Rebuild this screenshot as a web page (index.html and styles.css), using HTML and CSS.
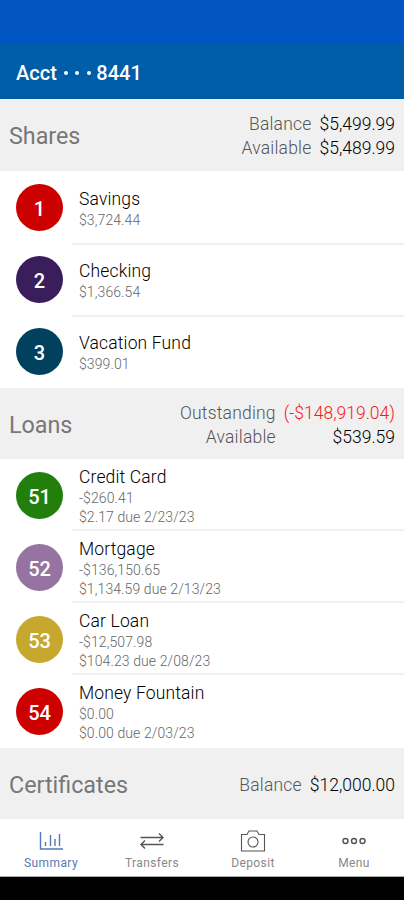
FILE: index.html
```html
<!DOCTYPE html>
<html lang="en">
<head>
<meta charset="utf-8">
<title>Account summary</title>
<link rel="stylesheet" href="styles.css">
</head>
<body>
<div class="status"></div>
<header class="header"><span>Acct</span><span class="dots"><i></i><i></i><i></i></span><span>8441</span></header>
<main>
<section>
<div class="section-head"><h2>Shares</h2><dl class="totals"><dt>Balance</dt><dd>$5,499.99</dd><dt>Available</dt><dd>$5,489.99</dd></dl></div>
<ul class="list">
<li class="row"><span class="badge red">1</span><div class="info"><h3>Savings</h3><p>$3,724.44</p></div></li>
<li class="row"><span class="badge purple">2</span><div class="info"><h3>Checking</h3><p>$1,366.54</p></div></li>
<li class="row"><span class="badge teal">3</span><div class="info"><h3>Vacation Fund</h3><p>$399.01</p></div></li>
</ul>
</section>
<section>
<div class="section-head"><h2>Loans</h2><dl class="totals"><dt>Outstanding</dt><dd class="negative">(-$148,919.04)</dd><dt>Available</dt><dd>$539.59</dd></dl></div>
<ul class="list loans">
<li class="row"><span class="badge green">51</span><div class="info"><h3>Credit Card</h3><p>-$260.41</p><p>$2.17 due 2/23/23</p></div></li>
<li class="row"><span class="badge mauve">52</span><div class="info"><h3>Mortgage</h3><p>-$136,150.65</p><p>$1,134.59 due 2/13/23</p></div></li>
<li class="row"><span class="badge gold">53</span><div class="info"><h3>Car Loan</h3><p>-$12,507.98</p><p>$104.23 due 2/08/23</p></div></li>
<li class="row"><span class="badge red">54</span><div class="info"><h3>Money Fountain</h3><p>$0.00</p><p>$0.00 due 2/03/23</p></div></li>
</ul>
</section>
<section>
<div class="section-head"><h2>Certificates</h2><dl class="totals"><dt>Balance</dt><dd>$12,000.00</dd></dl></div>
</section>
</main>
<nav class="tabs">
<a class="tab active"><svg width="26" height="22" viewBox="0 0 26 22"><path d="M2.500 2v17H25M7.500 16v-4M12.500 16V5M17 16V9M21.500 16V4"/></svg><span>Summary</span></a>
<a class="tab"><svg width="26" height="22" viewBox="0 0 26 22"><path d="M1.500 7.500H24M20 3.500l4 4-4 4M24.500 14.500H2M6 10.500l-4 4 4 4"/></svg><span>Transfers</span></a>
<a class="tab"><svg class="thin" width="26" height="22" viewBox="0 0 26 22"><path d="M1.500 4.500H7l2-3.500h8l2 3.500h5.500V21h-23z"/><circle cx="13" cy="12" r="5"/></svg><span>Deposit</span></a>
<a class="tab"><svg width="26" height="22" viewBox="0 0 26 22"><circle cx="4.500" cy="11" r="2.500"/><circle cx="13" cy="11" r="2.500"/><circle cx="21.500" cy="11" r="2.500"/></svg><span>Menu</span></a>
</nav>
<div class="system-bar"></div>
</body>
</html>
```
FILE: styles.css
```css
* { box-sizing: border-box; margin: 0; padding: 0; }
body { width: 404px; height: 900px; overflow: hidden; background: #fff; font-family: Roboto, sans-serif; color: #222; }
.status { height: 44px; background: #0055c3; }
.header { height: 55px; padding: 3px 16px 0; display: flex; align-items: center; background: #005da8; color: #fff; font-size: 20px; font-weight: 500; }
.dots { display: flex; gap: 7.500px; margin: 0 5.500px 0 7px; }
.dots i { width: 4px; height: 4px; border-radius: 50%; background: #fff; }
.section-head { height: 72px; padding: 2px 9px 0; display: flex; align-items: center; justify-content: space-between; background: #f0f0f0; }
section + section .section-head { height: 71px; }
h2 { font-size: 23.300px; line-height: 28px; font-weight: 400; color: #777; }
.totals { display: grid; grid-template-columns: auto auto; column-gap: 8px; text-align: right; font-size: 17.500px; line-height: 24px; font-weight: 300; }
dt { color: #555; letter-spacing: .2px; }
dd { color: #000; }
.totals .negative { color: #f51a1a; }
.list { list-style: none; padding-bottom: 1px; }
.row { height: 72px; padding-left: 16px; display: flex; align-items: center; gap: 9px; }
.badge { width: 47px; height: 47px; margin-top: 1px; border-radius: 50%; display: flex; align-items: center; justify-content: center; color: #fff; font-size: 20px; font-weight: 500; padding-top: 2px; }
.info { flex: 1; height: 72px; padding: 17px 0 0 7px; }
.row + .row .info { border-top: 2px solid #efefef; padding-top: 15px; }
.info h3 { font-size: 17.500px; line-height: 23px; font-weight: 300; color: #000; letter-spacing: .15px; }
.info p { font-size: 14px; line-height: 19px; font-weight: 300; color: #666; letter-spacing: .1px; }
.loans .info, .loans .row + .row .info { padding-top: 7px; border-top: 0; border-bottom: 2px solid #f1f1f1; }
.loans .row:last-child .info { border-bottom: 0; }
.red { background: #cc0000; }
.purple { background: #3a1e5b; }
.teal { background: #00425e; }
.green { background: #237f0c; }
.mauve { background: #9673a0; }
.gold { background: #c6a82f; }
.tabs { height: 58px; display: grid; grid-template-columns: repeat(4, 1fr); border-bottom: 1px solid #aaa; }
.tab { display: flex; flex-direction: column; align-items: center; padding: 11px 0 0 1px; color: #888; font-size: 12px; line-height: 16px; letter-spacing: .4px; }
.tab span { margin-top: 3px; }
.tab svg { fill: none; stroke: #555; stroke-width: 1.400; }
.tab .thin { stroke-width: 1.100; }
.tab.active { color: #5578b8; }
.tab.active svg { stroke: #5578b8; }
.system-bar { height: 23px; background: #000; }
```
